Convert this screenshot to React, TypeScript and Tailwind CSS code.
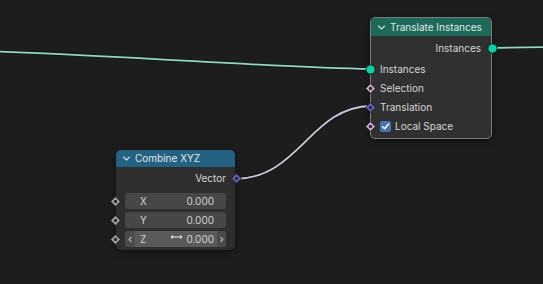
import type { ReactNode } from "react";

type SocketKind = "geo" | "bool" | "vec" | "float";

const Socket = ({ kind }: { kind: SocketKind }) => {
  if (kind === "geo") {
    return (
      <svg width="11" height="11" viewBox="0 0 11 11">
        <circle cx="5.5" cy="5.5" r="4.6" fill="#00d6a3" stroke="#1b1b1b" strokeWidth="0.9" />
      </svg>
    );
  }
  const color = kind === "bool" ? "#cca6d6" : kind === "vec" ? "#6363c7" : "#a1a1a1";
  return (
    <svg width="11" height="11" viewBox="0 0 11 11">
      <path d="M5.5 0.6 L10.4 5.5 L5.5 10.4 L0.6 5.5 Z" fill={color} stroke="#1b1b1b" strokeWidth="0.8" />
      <circle cx="5.5" cy="5.5" r="1.7" fill="#2a2a2a" />
    </svg>
  );
};

const Chevron = () => (
  <svg width="9" height="9" viewBox="0 0 9 9" className="shrink-0">
    <path d="M1.5 3 L4.5 6 L7.5 3" fill="none" stroke="#d8d8d8" strokeWidth="1.1" strokeLinecap="round" strokeLinejoin="round" />
  </svg>
);

const InputRow = ({ kind, children }: { kind: SocketKind; children: ReactNode }) => (
  <div className="relative flex h-[19px] items-center pl-[9px]">
    <div className="absolute left-[-6px] top-[4px]">
      <Socket kind={kind} />
    </div>
    {children}
  </div>
);

const OutputRow = ({ kind, label, padRight }: { kind: SocketKind; label: string; padRight: string }) => (
  <div className={`relative flex h-[19px] items-center justify-end ${padRight}`}>
    <span>{label}</span>
    <div className="absolute right-[-6.5px] top-[4px]">
      <Socket kind={kind} />
    </div>
  </div>
);

const Field = ({ label, active }: { label: string; active?: boolean }) => (
  <div className="relative">
    <div className="absolute left-[-15px] top-[2.5px]">
      <Socket kind="float" />
    </div>
    <div
      className={`flex h-[16px] items-center rounded-[3px] text-[#d2d2d2] ${
        active ? "bg-[#5a5a5a]" : "bg-[#474747]"
      }`}
    >
      {active ? (
        <>
          <span className="flex h-full w-[10px] items-center justify-center rounded-l-[3px] bg-[#4b4b4b] text-[11px] text-[#cfcfcf]">‹</span>
          <span className="pl-[5px]">{label}</span>
          <div className="flex-1" />
          <svg width="13" height="6" viewBox="0 0 13 6" className="mb-[5px] mr-[3px]">
            <path d="M1 3 H12 M1 3 L3 1.5 M1 3 L3 4.5 M12 3 L10 1.5 M12 3 L10 4.5" stroke="#f0f0f0" strokeWidth="1" fill="none" />
          </svg>
          <span className="pr-[3px]">0.000</span>
          <span className="flex h-full w-[9px] items-center justify-center rounded-r-[3px] bg-[#4b4b4b] text-[11px] text-[#cfcfcf]">›</span>
        </>
      ) : (
        <>
          <span className="pl-[15px]">{label}</span>
          <div className="flex-1" />
          <span className="pr-[12px]">0.000</span>
        </>
      )}
    </div>
  </div>
);

export default function App() {
  return (
    <div
      className="relative h-[284px] w-[543px] overflow-hidden bg-[#1d1d1d] text-[10px] text-[#d6d6d6]"
      style={{ fontFamily: "Inter, 'Noto Sans', 'DejaVu Sans', sans-serif" }}
    >
      {/* Wires */}
      <svg className="absolute inset-0" width="543" height="284" viewBox="0 0 543 284">
        <path d="M-2 51.5 C 150 57, 280 68, 371 69" fill="none" stroke="#161616" strokeWidth="3.4" />
        <path d="M-2 51.5 C 150 57, 280 68, 371 69" fill="none" stroke="#8fd8c4" strokeWidth="1.8" />
        <path d="M490 48 L545 47" fill="none" stroke="#161616" strokeWidth="3.4" />
        <path d="M490 48 L545 47" fill="none" stroke="#8fd8c4" strokeWidth="1.8" />
        <path d="M235 179 C 300 178, 310 107, 371 106" fill="none" stroke="#161616" strokeWidth="3.4" />
        <path d="M235 179 C 300 178, 310 107, 371 106" fill="none" stroke="#cbc6dc" strokeWidth="1.8" />
      </svg>

      {/* Translate Instances node */}
      <div className="absolute left-[370px] top-[17px] w-[122px] rounded-[5px] border border-[#7c7c7c] bg-[#303030] shadow-[0_2px_6px_rgba(0,0,0,0.5)]">
        <div className="flex h-[18px] items-center gap-[4px] whitespace-nowrap rounded-t-[4px] bg-[#1c6b5a] pl-[6px] text-[#e4e4e4]">
          <Chevron />
          <span>Translate Instances</span>
        </div>
        <div className="pb-[2px] pt-[3px]">
          <OutputRow kind="geo" label="Instances" padRight="pr-[10px]" />
          <div className="mt-[2px]">
            <InputRow kind="geo">Instances</InputRow>
            <InputRow kind="bool">Selection</InputRow>
            <InputRow kind="vec">Translation</InputRow>
            <InputRow kind="bool">
              <div className="mr-[4px] flex h-[11px] w-[11px] items-center justify-center rounded-[2px] bg-[#4772b3]">
                <svg width="9" height="9" viewBox="0 0 9 9">
                  <path d="M1.5 4.8 L3.6 6.8 L7.6 2" fill="none" stroke="#ffffff" strokeWidth="1.4" strokeLinecap="round" strokeLinejoin="round" />
                </svg>
              </div>
              <span>Local Space</span>
            </InputRow>
          </div>
        </div>
      </div>

      {/* Combine XYZ node */}
      <div className="absolute left-[116px] top-[150px] w-[119px] rounded-[5px] bg-[#2e2e2e] shadow-[0_2px_6px_rgba(0,0,0,0.5)]">
        <div className="flex h-[17px] items-center gap-[4px] whitespace-nowrap rounded-t-[5px] bg-[#246283] pl-[6px] text-[#e4e4e4]">
          <Chevron />
          <span>Combine XYZ</span>
        </div>
        <div className="pb-[3px] pt-[2px]">
          <OutputRow kind="vec" label="Vector" padRight="pr-[9px]" />
          <div className="mt-[5px] flex flex-col gap-[3px] px-[9px]">
            <Field label="X" />
            <Field label="Y" />
            <Field label="Z" active />
          </div>
        </div>
      </div>
    </div>
  );
}
